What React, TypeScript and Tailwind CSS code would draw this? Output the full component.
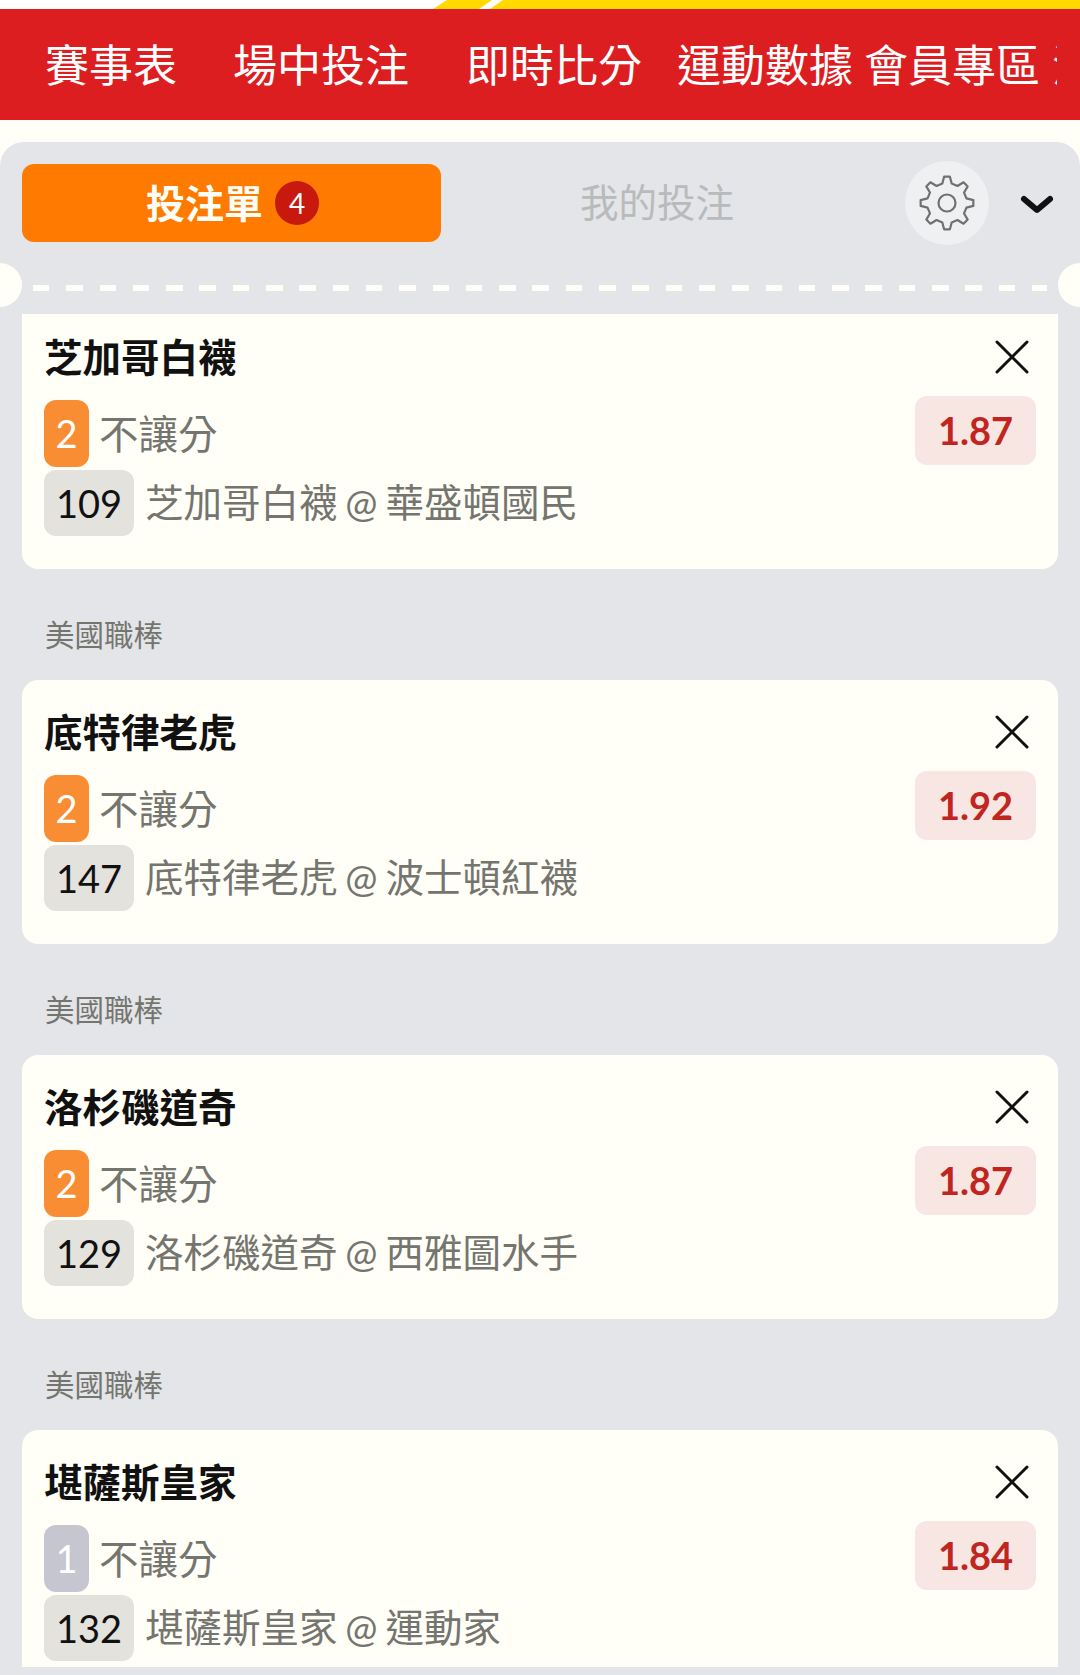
const FONT = "font-['Lato','Noto_Sans_CJK_TC',sans-serif]";

const navItems = [
  { label: '賽事表', className: 'ml-[45px]' },
  { label: '場中投注', className: 'ml-[56px]' },
  { label: '即時比分', className: 'ml-[57px]' },
  { label: '運動數據', className: 'ml-[35px]' },
  { label: '會員專區', className: 'ml-[11px]' },
  { label: '活動優惠', className: 'ml-[12px]' },
];

const bets = [
  { id: 1, name: '芝加哥白襪', rank: 2, odds: '1.87', no: '109', match: '芝加哥白襪 @ 華盛頓國民' },
  { id: 2, name: '底特律老虎', rank: 2, odds: '1.92', no: '147', match: '底特律老虎 @ 波士頓紅襪' },
  { id: 3, name: '洛杉磯道奇', rank: 2, odds: '1.87', no: '129', match: '洛杉磯道奇 @ 西雅圖水手' },
  { id: 4, name: '堪薩斯皇家', rank: 1, odds: '1.84', no: '132', match: '堪薩斯皇家 @ 運動家' },
];

// 8 tooth outline, polar points around the centre of a 56 box
function gearPath() {
  const pts: string[] = [];
  const teeth = 8;
  for (let i = 0; i < teeth; i++) {
    const a = (i * 2 * Math.PI) / teeth - Math.PI / 2;
    const step = (2 * Math.PI) / teeth;
    const ring: [number, number][] = [
      [20, a - step * 0.3],
      [26.5, a - step * 0.14],
      [26.5, a + step * 0.14],
      [20, a + step * 0.3],
    ];
    ring.forEach(([r, t], j) => {
      const x = (28 + r * Math.cos(t)).toFixed(2);
      const y = (28 + r * Math.sin(t)).toFixed(2);
      pts.push(`${i === 0 && j === 0 ? 'M' : 'L'}${x} ${y}`);
    });
  }
  return pts.join(' ') + ' Z';
}

function TopStrip() {
  return (
    <div className="h-[9px] bg-white">
      <svg width="1080" height="9" viewBox="0 0 1080 9" className="block">
        <polygon points="433,9 447,0 1080,0 1080,9" fill="#ffd900" />
        <polygon points="479,9 490,9 503,0 492,0" fill="#ffffff" />
      </svg>
    </div>
  );
}

function BetCard({ bet, first }: { bet: (typeof bets)[number]; first: boolean }) {
  return (
    <div className={`mx-[22px] flex justify-between bg-[#fffef7] pl-[22px] pr-[22px] ${first ? 'rounded-b-2xl pt-[21px] pb-[33px]' : 'rounded-2xl pt-[30px] pb-[33px]'}`}>
      <div>
        <div className="h-[44px] text-[38.5px] leading-[44px] font-bold text-[#111111]">{bet.name}</div>
        <div className="mt-[21px] flex h-[67px] items-center">
          <span className={`flex h-[67px] w-[45px] items-center justify-center rounded-xl text-[38px] text-white ${bet.rank === 1 ? 'bg-[#c5c6d0]' : 'bg-[#f98d33]'}`}>
            {bet.rank}
          </span>
          <span className="ml-[10px] text-[39.5px] text-[#75756f]">不讓分</span>
        </div>
        <div className="mt-[3px] flex h-[66px] items-center">
          <span className="flex h-[66px] w-[90px] items-center justify-center rounded-xl bg-[#e3e2dd] text-[38px] text-[#111111]">
            {bet.no}
          </span>
          <span className="ml-[11px] text-[38.5px] [word-spacing:-2px] whitespace-nowrap text-[#75756f]">{bet.match}</span>
        </div>
      </div>
      <div className="flex flex-col items-end">
        <svg width="34" height="34" viewBox="0 0 34 34" className="mt-[5px] mr-[7px]" fill="none" stroke="#111111" strokeWidth="3" strokeLinecap="round">
          <path d="M2 2 L32 32 M32 2 L2 32" />
        </svg>
        <div className="mt-[22px] flex h-[69px] w-[121px] items-center justify-center rounded-xl bg-[#f7e6e1] text-[38px] font-bold text-[#c0261f]">
          {bet.odds}
        </div>
      </div>
    </div>
  );
}

export default function App() {
  return (
    <div className={`h-[1675px] w-[1080px] overflow-hidden bg-[#fffef7] ${FONT}`}>
      <TopStrip />
      <nav className="h-[111px] bg-[#dc1e20] pr-[23px]">
        <div className="flex h-full items-center overflow-hidden text-[44px] whitespace-nowrap text-white">
          {navItems.map((item) => (
            <span key={item.label} className={`shrink-0 ${item.className}`}>{item.label}</span>
          ))}
        </div>
      </nav>

      <section className="relative mt-[22px] h-[1533px] rounded-t-3xl bg-[#e3e5e8]">
        <div className="flex items-center pt-[19px] pl-[22px]">
          <div className="flex h-[78px] w-[419px] items-center justify-center gap-3 rounded-xl bg-[#ff7a00] pl-[2px]">
            <span className="text-[39px] font-bold text-[#fffef7]">投注單</span>
            <span className="flex h-[44px] w-[44px] items-center justify-center rounded-full bg-[#c8190f] text-[28px] text-white">4</span>
          </div>
          <div className="w-[432px] text-center text-[38.5px] text-[#b9babb]">我的投注</div>
          <div className="ml-[32px] flex h-[84px] w-[84px] items-center justify-center rounded-full bg-[#eff0f2]">
            <svg width="56" height="56" viewBox="0 0 56 56" fill="none" stroke="#6f7072" strokeWidth="2.2" strokeLinejoin="round">
              <path d={gearPath()} />
              <circle cx="28" cy="28" r="8.5" />
            </svg>
          </div>
          <svg width="34" height="20" viewBox="0 0 34 20" className="mt-[3px] ml-[31px]" fill="none" stroke="#111111" strokeWidth="6" strokeLinecap="round" strokeLinejoin="round">
            <path d="M4 4 L17 15 L30 4" />
          </svg>
        </div>

        {/* perforation */}
        <div className="mx-[33px] mt-[40px] h-[6px] bg-[repeating-linear-gradient(90deg,#fffef7_0,#fffef7_16.5px,transparent_16.5px,transparent_33.3px)]" />
        <div className="absolute top-[121px] left-[-22px] h-[44px] w-[44px] rounded-full bg-[#fffef7]" />
        <div className="absolute top-[121px] right-[-22px] h-[44px] w-[44px] rounded-full bg-[#fffef7]" />

        <div className="mt-[23px] h-[1353px] overflow-hidden">
          {bets.map((bet, i) => (
            <div key={bet.id}>
              {i > 0 && (
                <div className="mt-[46px] mb-[25px] h-[40px] pl-[45px] text-[29.5px] leading-[40px] text-[#75756f]">美國職棒</div>
              )}
              <BetCard bet={bet} first={i === 0} />
            </div>
          ))}
        </div>
      </section>
    </div>
  );
}
